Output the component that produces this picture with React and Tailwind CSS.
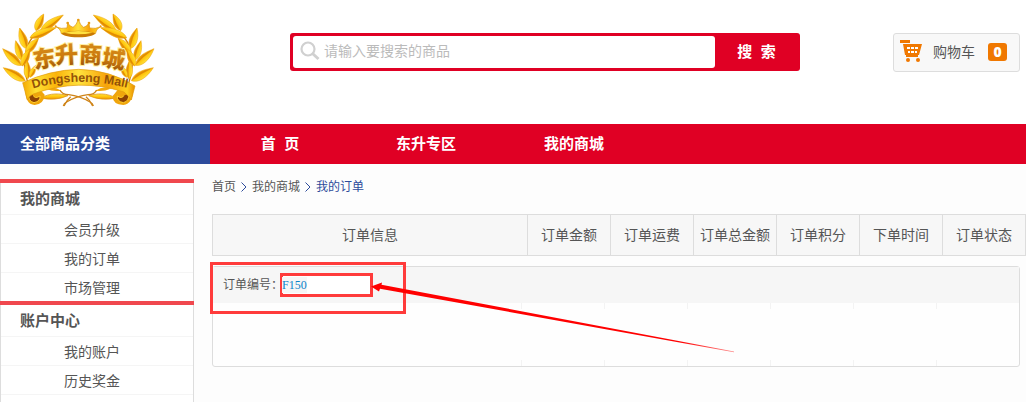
import React from 'react';

const leaves = [
  [122, 93, 190, 45, 13],
  [108, 92, 131, 42, 13],
  [90, 114, 168, 83, 13],
  [80, 146, 59, 84, 14],
  [78, 160, 116, 114, 13],
  [66, 180, 47, 122, 12],
  [64, 196, 8, 146, 14],
  [66, 198, 90, 146, 13],
  [76, 242, 10, 203, 14],
  [84, 236, 82, 182, 12],
  [90, 232, 108, 196, 9],
];

function Leaf({ leaf }) {
  const [x1, y1, x2, y2, w] = leaf;
  const length = Math.hypot(x2 - x1, y2 - y1);
  const angle = (Math.atan2(y2 - y1, x2 - x1) * 180) / Math.PI;
  return (
    <g transform={`translate(${x1} ${y1}) rotate(${angle})`}>
      <path
        d={`M0 0C${length * 0.15} ${-w * 1.1} ${length * 0.55} ${-w * 1.3} ${length} 0C${length * 0.7} ${w * 0.5} ${length * 0.35} ${w * 1.4} 0 0Z`}
        fill="url(#leaf)"
        stroke="#eda512"
        strokeWidth="1.5"
      />
      <path d={`M0 0Q${length * 0.4} ${w * 1.1} ${length} 0Q${length * 0.5} ${w * 0.3} 0 0Z`} fill="#e08c04" />
    </g>
  );
}

function Branch() {
  return (
    <g fill="none">
      <path d="M124 92C88 105 56 170 84 250" stroke="#d08208" strokeWidth="4" />
      {leaves.map((leaf, i) => (
        <Leaf key={i} leaf={leaf} />
      ))}
      <path d="M122 294C150 278 180 280 204 287Q165 304 122 294Z" fill="url(#leaf)" stroke="#d98a0a" strokeWidth="2" />
      <path d="M138 266Q160 256 184 272Q160 276 138 266Z" fill="#f3a80c" />
      <path d="M180 270Q186 284 206 284Q240 288 270 306Q278 310 280 318M192 318Q200 300 212 290" stroke="#cf8418" strokeWidth="4" />
    </g>
  );
}

function Logo() {
  return (
    <svg viewBox="0 0 510 372" className="h-[124px] w-[170px]" role="img" aria-label="东升商城 Dongsheng Mall">
      <defs>
        <linearGradient id="leaf" x1="0" y1="0" x2="0" y2="1">
          <stop offset="0" stopColor="#ffe23a" />
          <stop offset="0.5" stopColor="#ffc60e" />
          <stop offset="1" stopColor="#ee9500" />
        </linearGradient>
        <linearGradient id="ribbon" x1="0" y1="0" x2="1" y2="0">
          <stop offset="0" stopColor="#f5a800" />
          <stop offset="0.12" stopColor="#ffe034" />
          <stop offset="0.3" stopColor="#fbb40b" />
          <stop offset="0.5" stopColor="#ffe23d" />
          <stop offset="0.75" stopColor="#f7a20a" />
          <stop offset="0.93" stopColor="#ffd01e" />
          <stop offset="1" stopColor="#e78a00" />
        </linearGradient>
        <linearGradient id="glyph" x1="0" y1="0" x2="0" y2="1">
          <stop offset="0" stopColor="#dc9420" />
          <stop offset="0.6" stopColor="#cb7a0c" />
          <stop offset="1" stopColor="#8a4606" />
        </linearGradient>
        <path id="arc" d="M99 266Q235 224 400 268" />
      </defs>
      <Branch />
      <g transform="translate(470 0) scale(-1 1)">
        <Branch />
      </g>
      <path
        d="M184 101Q182 86 167 80Q184 88 201 84L203 69Q210 80 219 82Q230 76 235 58Q240 76 251 82Q260 80 267 69L269 84Q286 88 302 80Q288 86 286 101Q235 118 184 101Z"
        fill="url(#ribbon)"
        stroke="#d98f0a"
        strokeWidth="2"
      />
      <path d="M185 99Q235 86 285 99Q282 111 235 112Q188 111 185 99Z" fill="#c97a04" />
      <path d="M192 98Q235 88 278 98Q235 107 192 98Z" fill="#ffe140" />
      <g fill="#e99b10">
        <circle cx="167" cy="79" r="3" />
        <circle cx="203" cy="69" r="4" />
        <circle cx="235" cy="60" r="4" />
        <circle cx="267" cy="69" r="4" />
        <circle cx="302" cy="79" r="3" />
      </g>
      <path d="M76 262Q74 314 104 315Q132 312 134 284L118 266ZM400 262Q400 312 370 315Q338 314 338 288L356 266Z" fill="#f0a50c" />
      <path d="M86 282Q84 304 102 308Q122 304 120 288Q104 298 100 286M386 282Q388 304 370 308Q350 304 352 288Q366 298 372 286" fill="#8f4203" stroke="#ffcf2b" strokeWidth="3" />
      <path
        d="M68 248Q150 210 236 208Q330 210 405 258L394 300Q384 286 372 276Q235 232 100 282Q86 288 82 300Z"
        fill="url(#ribbon)"
        stroke="#e09a0c"
        strokeWidth="2"
      />
      <g
        fontFamily='"Noto Sans CJK SC", sans-serif'
        fontWeight="900"
        fontSize="69"
        fill="url(#glyph)"
        stroke="#fff0a0"
        strokeWidth="6"
        paintOrder="stroke"
        textAnchor="middle"
      >
        <text transform="translate(137 201) rotate(-9)">东</text>
        <text transform="translate(201 189) rotate(-3)">升</text>
        <text transform="translate(271 189) rotate(3)">商</text>
        <text transform="translate(337 202) rotate(9)">城</text>
      </g>
      <text fontFamily='"Liberation Sans", Arial, sans-serif' fontWeight="700" fontSize="37" fill="#935208">
        <textPath href="#arc">Dongsheng Mall</textPath>
      </text>
    </svg>
  );
}

function SearchIcon() {
  return (
    <svg viewBox="0 0 20 20" className="h-5 w-5 shrink-0" fill="none" stroke="#d0d0d0" aria-hidden="true">
      <circle cx="8" cy="8" r="6.5" strokeWidth="2.2" />
      <path d="M12.5 12.5L18.5 18" strokeWidth="3" />
    </svg>
  );
}

function CartIcon() {
  return (
    <svg viewBox="0 0 23 23" className="h-[23px] w-[23px] shrink-0" aria-hidden="true">
      <path d="M0 0H10V3H0ZM3 4H22L19 15H18V17H6V15H5Z" fill="#f07800" />
      <path d="M7 7H10V9H7ZM11 7H14V9H11ZM15 7H18V9H15ZM8 11H10V13H8ZM11 11H14V13H11ZM15 11H17V13H15Z" fill="#fff" />
      <circle cx="8" cy="20" r="2" fill="#f07800" />
      <circle cx="18" cy="20" r="2" fill="#f07800" />
    </svg>
  );
}

function Header() {
  return (
    <header className="flex h-[124px] items-start bg-white pr-1.5">
      <a href="#home" className="mr-[120px] block shrink-0">
        <Logo />
      </a>
      <form className="mt-[33px] flex h-[38px] w-[510px] shrink-0 rounded-[3px] bg-[#e00024] p-[3px] pr-0" onSubmit={(e) => e.preventDefault()}>
        <label className="flex flex-1 items-center gap-1 rounded-[3px] bg-white pb-0.5 pl-[7px]">
          <SearchIcon />
          <input
            type="text"
            aria-label="搜索商品"
            placeholder="请输入要搜索的商品"
            className="min-w-0 flex-1 bg-transparent text-sm text-[#555] outline-none placeholder:text-[#bbb]"
          />
        </label>
        <button type="submit" className="w-[85px] pr-0.5 text-[15px] font-bold whitespace-pre text-white">
          搜  索
        </button>
      </form>
      <a href="#cart" className="mt-[33px] ml-auto flex h-[39px] shrink-0 items-center rounded-[3px] border border-[#ddd] bg-[#f8f8f8] pr-3 pb-0.5 pl-1.5 text-sm text-[#555]">
        <CartIcon />
        <span className="ml-2.5">购物车</span>
        <span className="ml-[13px] flex h-[18px] w-[19px] items-center justify-center rounded-[3px] bg-[#f07800] font-['Open_Sans'] font-extrabold text-white">
          0
        </span>
      </a>
    </header>
  );
}

function NavBar() {
  return (
    <nav className="flex h-10 items-stretch bg-[#e00024] text-[15px] font-bold text-white">
      <a href="#categories" className="flex w-[210px] items-center bg-[#2d4b9b] pl-5">
        全部商品分类
      </a>
      <div className="flex gap-1 text-center leading-10">
        <a href="#home" className="w-[140px] whitespace-pre">首  页</a>
        <a href="#zone" className="w-36">东升专区</a>
        <a href="#mall" className="w-36">我的商城</a>
      </div>
    </nav>
  );
}

function MenuGroup({ title, items, last }) {
  return (
    <section className={last ? 'flex flex-1 flex-col' : 'flex flex-col'}>
      <div className="h-1 bg-[#f0484e]" />
      <div className="flex-1 border-x border-[#ddd]">
        <h2 className="h-8 border-b border-[#f5f5f5] pl-[19px] text-[15px] leading-[31px] font-bold">{title}</h2>
        <ul className={last ? '' : '-mb-px'}>
          {items.map((item) => (
            <li key={item} className="h-[29px] border-b border-[#f5f5f5] pl-[63px] text-sm leading-[31px]">
              <a href="#menu">{item}</a>
            </li>
          ))}
        </ul>
      </div>
    </section>
  );
}

const Chevron = () => (
  <svg viewBox="0 0 6 10" className="h-2.5 w-1.5" fill="none" stroke="#2d4b9b" aria-hidden="true">
    <path d="M0.5 0.5L5 5L0.5 9.5" />
  </svg>
);

const columns = ['订单金额', '订单运费', '订单总金额', '订单积分', '下单时间', '订单状态'];

function ColumnTicks() {
  return (
    <div className="flex h-1.5 justify-end" aria-hidden="true">
      {columns.map((name) => (
        <span key={name} className="w-[83px] border-l border-[#f3f3f3]" />
      ))}
    </div>
  );
}

function Order() {
  return (
    <section className="relative mt-2.5 mr-1.5 flex h-[101px] flex-col rounded-[3px] border border-[#ddd] bg-[#fefefe]">
      <div className="flex h-9 items-center bg-[#f6f6f6] pl-2.5 text-xs">
        <div className="absolute top-1.5 left-[67px] h-6 w-[93px] border-[3px] border-[#ff3b3b] bg-white" />
        <span className="relative">订单编号：</span>
        <a href="#order" className="relative -ml-px bg-[#f6f6f6] font-['Liberation_Serif'] text-[#0b84cb]">F150</a>
      </div>
      <div className="flex flex-1 flex-col justify-between">
        <ColumnTicks />
        <ColumnTicks />
      </div>
      <div className="absolute -top-[5px] -left-[3px] h-[52px] w-[196px] border-[3px] border-[#ff3b3b]" />
      <svg viewBox="0 0 364 72" className="absolute top-[15px] left-[158px] h-[72px] w-[364px]" aria-hidden="true">
        <defs>
          <linearGradient id="fade" x1="0" x2="1">
            <stop offset="0.85" stopColor="#f00" />
            <stop offset="1" stopColor="#f00" stopOpacity="0.45" />
          </linearGradient>
        </defs>
        <path d="M0 4.5L11 0.5L10.5 2.8L363 69.5V70.2L9 6.8L8 9.5Z" fill="url(#fade)" />
      </svg>
    </section>
  );
}

export default function App() {
  return (
    <div className="flex min-h-screen flex-col bg-[#fdfdfd] font-['Liberation_Sans','Noto_Sans_CJK_SC',sans-serif] text-[#555]">
      <Header />
      <NavBar />
      <div className="flex flex-1 gap-[18px] pt-[15px]">
        <aside className="flex w-[194px] shrink-0 flex-col bg-white">
          <MenuGroup title="我的商城" items={['会员升级', '我的订单', '市场管理']} />
          <MenuGroup title="账户中心" items={['我的账户', '历史奖金']} last />
        </aside>
        <main className="min-w-0 flex-1">
          <nav aria-label="面包屑" className="flex h-[15px] items-center gap-[5px] text-xs">
            <a href="#home">首页</a>
            <Chevron />
            <a href="#mall">我的商城</a>
            <Chevron />
            <a href="#orders" className="text-[#2d4b9b]">我的订单</a>
          </nav>
          <table className="mt-5 h-[42px] w-full table-fixed border-collapse bg-[#f7f7f7] text-sm">
            <thead>
              <tr>
                <th className="border border-[#ddd] font-normal">订单信息</th>
                {columns.map((name) => (
                  <th key={name} className="w-[83px] border border-[#ddd] font-normal whitespace-nowrap">{name}</th>
                ))}
              </tr>
            </thead>
          </table>
          <Order />
        </main>
      </div>
    </div>
  );
}
